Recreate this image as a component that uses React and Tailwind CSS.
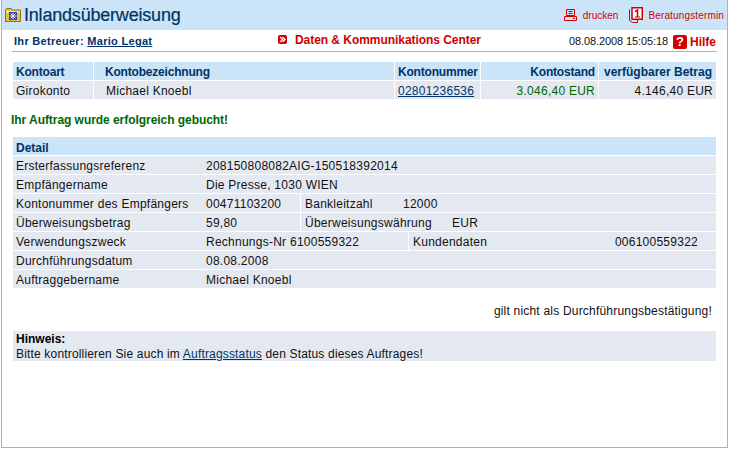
const Folder = () => (
  <svg width="16" height="14" viewBox="0 0 16 14" className="shrink-0">
    <path d="M.5 13.500V1.500l1-1h5l1 1.500h8v11.500z" fill="#e6c23c" stroke="#8a7414" />
    <rect x="1" y="3" width="14" height="2" fill="#fbe77a" />
    <rect x="4" y="4" width="8" height="8" fill="#1c38d8" />
    <path d="M8 4.500v7M4.500 8h7M5.500 5.500l5 5M10.500 5.500l-5 5" stroke="#fff9c8" strokeWidth="1" />
  </svg>
);

const Printer = () => (
  <svg width="13" height="12" viewBox="0 0 13 12" fill="none" stroke="#d40000" className="shrink-0">
    <path d="M2.500 .5h8v6h-8zM4.500 2.500h4M4.500 4.500h4M.5 7.500h12v4H.5zM9 9.500h2" />
  </svg>
);

const Calendar = () => (
  <svg width="14" height="16" viewBox="0 0 14 16" fill="none" stroke="#d40000" className="shrink-0">
    <path d="M.5 2.500v11l3 2h5v-3" />
    <rect x="3" y=".75" width="10.250" height="11.500" fill="#fff" strokeWidth="1.500" />
    <path d="M6 4.500l2.500-1.500v7" strokeWidth="1.500" />
    <path d="M6 10h5" />
  </svg>
);

const Help = () => (
  <div className="flex h-[14px] w-[14px] shrink-0 items-center justify-center rounded-[2px] bg-[#d40000] text-[13px] font-bold leading-none tracking-normal text-white">?</div>
);

const Chevron = () => (
  <div className="flex h-[9px] w-[9px] shrink-0 items-center justify-center rounded-[2px] bg-[#cc0000]">
    <svg width="7" height="7" viewBox="0 0 7 7" fill="none" stroke="#fff" strokeWidth="1.300">
      <path d="M1 1l2.500 2.500L1 6M3.500 1L6 3.500 3.500 6" />
    </svg>
  </div>
);

const Row = ({ children }) => (
  <div className="flex h-[18px] items-center gap-px">{children}</div>
);

const Cell = ({ className, children }) => (
  <div className={`flex h-full items-center bg-[#e4e9f1] pt-[2px] ${className}`}>{children}</div>
);

const detailRows = [
  ['Ersterfassungsreferenz', '208150808082AIG-150518392014'],
  ['Empfängername', 'Die Presse, 1030 WIEN'],
];

const lastRows = [
  ['Durchführungsdatum', '08.08.2008'],
  ['Auftraggebername', 'Michael Knoebl'],
];

export default function App() {
  return (
    <div className="flex h-[449px] w-[729px] flex-col bg-white font-['Liberation_Sans',Arial,sans-serif] text-[12px] tracking-[0.25px] text-[#111]">
      <div className="mx-px mb-[1px] flex h-[448px] flex-col border-x border-b border-[#a3b2c6]">
        {/* title bar */}
        <div className="flex h-[30px] shrink-0 items-center justify-between bg-[#cce4f8] pl-[3px] pr-[3px]">
          <div className="flex items-center gap-[3px]">
            <Folder />
            <h1 className="text-[18px] leading-none tracking-[-0.2px] text-[#003366] [-webkit-text-stroke:0.2px_#003366]">Inlandsüberweisung</h1>
          </div>
          <div className="flex items-center text-[10px] tracking-[0.15px] text-[#d40000]">
            <Printer />
            <span className="ml-[6px] tracking-normal">drucken</span>
            <span className="ml-[11px]"><Calendar /></span>
            <span className="ml-[5px]">Beratungstermin</span>
          </div>
        </div>

        <div className="flex flex-1 flex-col pl-[11px] pr-[11px]">
          {/* Betreuer line */}
          <div className="-mx-px flex h-[22px] items-center border-b border-[#a3b2c6] pl-[2px] pr-px">
            <div className="w-[264px] pt-[2px] text-[11px] font-bold tracking-[0.3px] text-[#003366]">
              Ihr Betreuer: <span className="underline">Mario Legat</span>
            </div>
            <div className="mb-[2px] flex items-center gap-[8px] text-[12px] font-bold tracking-[-0.05px] text-[#cc0000]">
              <Chevron />
              <span>Daten &amp; Kommunikations Center</span>
            </div>
            <div className="ml-auto flex items-center pt-[2px] text-[11px] tracking-[-0.1px]">
              <span>08.08.2008 15:05:18</span>
              <span className="ml-[5px] mr-[3px]"><Help /></span>
              <span className="text-[12px] font-bold tracking-normal text-[#cc0000]">Hilfe</span>
            </div>
          </div>

          {/* account table */}
          <div className="mt-[10px] flex flex-col gap-px">
            <div className="flex h-[18px] gap-px text-[12px] font-bold tracking-[-0.2px] text-[#003366]">
              <div className="flex w-[80px] items-center bg-[#cce4f8] pl-[3px] pt-[2px]">Kontoart</div>
              <div className="flex w-[300px] items-center bg-[#cce4f8] pl-[11px] pt-[2px]">Kontobezeichnung</div>
              <div className="flex w-[85px] items-center bg-[#cce4f8] pl-[3px] pt-[2px]">Kontonummer</div>
              <div className="flex w-[117px] items-center justify-end bg-[#cce4f8] pr-[3px] pt-[2px]">Kontostand</div>
              <div className="flex w-[117px] items-center justify-end bg-[#cce4f8] pr-[4px] pt-[2px] tracking-normal">verfügbarer Betrag</div>
            </div>
            <div className="flex h-[18px] gap-px">
              <Cell className="w-[80px] pl-[3px]">Girokonto</Cell>
              <Cell className="w-[300px] pl-[12px]">Michael Knoebl</Cell>
              <Cell className="w-[85px] pl-[3px]"><span className="text-[#003366] underline">02801236536</span></Cell>
              <Cell className="w-[117px] justify-end pr-[3px] text-[#006600]">3.046,40 EUR</Cell>
              <Cell className="w-[117px] justify-end pr-[3px]">4.146,40 EUR</Cell>
            </div>
          </div>

          <p className="-ml-[2px] mt-[13px] h-[16px] text-[12px] font-bold leading-[16px] tracking-[-0.05px] text-[#006600]">Ihr Auftrag wurde erfolgreich gebucht!</p>

          {/* detail table */}
          <div className="mt-[9px] flex flex-col gap-px">
            <div className="flex h-[18px] items-center bg-[#cce4f8] pl-[3px] pt-[3px] font-bold tracking-normal text-[#003366]">Detail</div>
            {detailRows.map(([label, value]) => (
              <Row key={label}>
                <Cell className="w-full">
                  <span className="w-[193px] pl-[3px]">{label}</span>
                  <span>{value}</span>
                </Cell>
              </Row>
            ))}
            <Row>
              <Cell className="w-[287px]">
                <span className="w-[193px] shrink-0 pl-[3px]">Kontonummer des Empfängers</span>
                <span>00471103200</span>
              </Cell>
              <Cell className="flex-1 pl-[4px]">
                <span className="w-[98px]">Bankleitzahl</span>
                <span>12000</span>
              </Cell>
            </Row>
            <Row>
              <Cell className="w-[287px]">
                <span className="w-[193px] shrink-0 pl-[3px]">Überweisungsbetrag</span>
                <span>59,80</span>
              </Cell>
              <Cell className="flex-1 pl-[4px]">
                <span className="w-[147px]">Überweisungswährung</span>
                <span>EUR</span>
              </Cell>
            </Row>
            <Row>
              <Cell className="w-[395px]">
                <span className="w-[193px] shrink-0 pl-[3px]">Verwendungszweck</span>
                <span>Rechnungs-Nr 6100559322</span>
              </Cell>
              <Cell className="flex-1 justify-between pl-[4px] pr-[18px]">
                <span>Kundendaten</span>
                <span>006100559322</span>
              </Cell>
            </Row>
            {lastRows.map(([label, value]) => (
              <Row key={label}>
                <Cell className="w-full">
                  <span className="w-[193px] pl-[3px]">{label}</span>
                  <span>{value}</span>
                </Cell>
              </Row>
            ))}
          </div>

          <p className="mt-[15px] pr-[4px] text-right leading-[16px] tracking-[0.2px]">gilt nicht als Durchführungsbestätigung!</p>

          <div className="mt-[12px] h-[30px] bg-[#e4e9f1] pl-[3px] pt-px leading-[15px] tracking-[0.17px]">
            <div className="font-bold tracking-normal text-black">Hinweis:</div>
            <div>
              Bitte kontrollieren Sie auch im <span className="text-[#003366] underline">Auftragsstatus</span> den Status dieses Auftrages!
            </div>
          </div>
        </div>
      </div>
    </div>
  );
}
